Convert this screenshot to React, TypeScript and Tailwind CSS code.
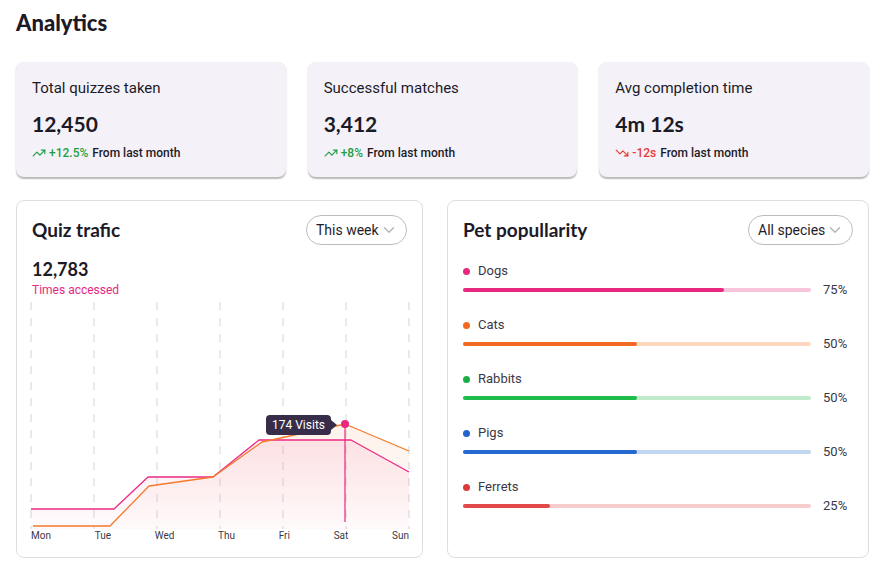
import { ChevronDown, TrendingDown, TrendingUp } from "lucide-react";

const stats = [
  { title: "Total quizzes taken", value: "12,450", delta: "+12.5%", up: true },
  { title: "Successful matches", value: "3,412", delta: "+8%", up: true },
  { title: "Avg completion time", value: "4m 12s", delta: "-12s", up: false },
];

const pets = [
  { name: "Dogs", pct: 75, dot: "bg-[#e8277f]", fill: "bg-[#e8277f]", track: "bg-[#f7c4dc]" },
  { name: "Cats", pct: 50, dot: "bg-[#f26a21]", fill: "bg-[#f26a21]", track: "bg-[#fdd6bf]" },
  { name: "Rabbits", pct: 50, dot: "bg-[#1aae44]", fill: "bg-[#1ebc4a]", track: "bg-[#bfeacb]" },
  { name: "Pigs", pct: 50, dot: "bg-[#2364c8]", fill: "bg-[#2569d0]", track: "bg-[#c0d7f1]" },
  { name: "Ferrets", pct: 25, dot: "bg-[#dc3a3a]", fill: "bg-[#e24a4a]", track: "bg-[#f6cccc]" },
];

const days = ["Mon", "Tue", "Wed", "Thu", "Fri", "Sat", "Sun"];
const gridX = [31, 94, 157, 220, 283, 346, 409];

const pinkPts = "31,509 114,509 148,477 213,477 259,440 351,440 409,472";
const orangePts = "33,526 110,526 149,486 213,477 262,442 345,424 409,451";

const Dropdown = ({ label, width }: { label: string; width: string }) => (
  <div
    className={`${width} h-[30px] rounded-full border border-[#bdbbc2] flex items-center justify-between pl-[9px] pr-[8px] text-[14px] text-[#1f1d2a]`}
  >
    <span>{label}</span>
    <ChevronDown size={18} strokeWidth={1.8} className="text-[#b3b1b8]" />
  </div>
);

const TrafficChart = () => (
  <div className="relative -ml-[2px] w-[380px]">
    <svg width={380} height={229} viewBox="30 300 380 229" className="block">
      <defs>
        <linearGradient id="pinkFill" x1="0" y1="0" x2="0" y2="1">
          <stop offset="0%" stopColor="#ec2a84" stopOpacity="0.09" />
          <stop offset="100%" stopColor="#ec2a84" stopOpacity="0.02" />
        </linearGradient>
        <linearGradient id="orangeFill" x1="0" y1="0" x2="0" y2="1">
          <stop offset="0%" stopColor="#f47a2a" stopOpacity="0.1" />
          <stop offset="100%" stopColor="#f47a2a" stopOpacity="0.01" />
        </linearGradient>
      </defs>
      {gridX.map((x) => (
        <line
          key={x}
          x1={x}
          x2={x}
          y1={302}
          y2={529}
          stroke="#e4e4e7"
          strokeWidth={1.5}
          strokeDasharray="8 8"
        />
      ))}
      <polygon points={`${orangePts} 409,529 33,529`} fill="url(#orangeFill)" />
      <polygon points={`${pinkPts} 409,529 31,529`} fill="url(#pinkFill)" />
      <polyline points={pinkPts} fill="none" stroke="#ec2a84" strokeWidth={1.3} strokeLinejoin="round" />
      <polyline points={orangePts} fill="none" stroke="#f47a2a" strokeWidth={1.3} strokeLinejoin="round" />
      <line x1={345} x2={345} y1={424} y2={522} stroke="#e8277f" strokeWidth={1.2} />
      <circle cx={345} cy={424} r={4} fill="#e8277f" />
    </svg>
    <div className="absolute left-[236px] top-[115px] h-[20px] px-[6px] rounded-[4px] bg-[#382d49] text-white text-[12px] leading-[20px] whitespace-nowrap">
      174 Visits
      <span className="absolute right-[-6px] top-[5px] w-0 h-0 border-y-[5px] border-y-transparent border-l-[6px] border-l-[#382d49]" />
    </div>
  </div>
);

export default function App() {
  return (
    <div className="min-h-screen bg-white pl-4 pr-[13px] pt-[9px] font-['Roboto',sans-serif] text-[#1c1a27]">
      <h1 className="font-['Lato',sans-serif] font-black text-[22px] leading-[28px] mb-[25px]">Analytics</h1>

      <div className="grid grid-cols-3 gap-[22px]">
        {stats.map((s) => (
          <div
            key={s.title}
            className="h-[115px] rounded-[8px] bg-[#f4f2f8] px-4 pt-4 shadow-[0_1.5px_1.5px_rgba(0,0,0,0.28)]"
          >
            <div className="text-[15px] leading-[20px]">{s.title}</div>
            <div className="mt-3 font-['Lato',sans-serif] font-bold text-[21px] leading-[28px]">{s.value}</div>
            <div className="mt-[7px] flex items-center text-[12px] leading-[16px] font-medium">
              {s.up ? (
                <TrendingUp size={14} strokeWidth={2} className="text-[#1e9e46]" />
              ) : (
                <TrendingDown size={14} strokeWidth={2} className="text-[#e53935]" />
              )}
              <span className={`ml-[3px] ${s.up ? "text-[#1e9e46]" : "text-[#e53935]"}`}>{s.delta}</span>
              <span className="ml-1">From last month</span>
            </div>
          </div>
        ))}
      </div>

      <div className="flex gap-6 mt-[23px]">
        <div className="w-[407px] h-[358px] rounded-[8px] border border-[#dedde2] bg-white px-[15px] pt-[14px]">
          <div className="flex items-center justify-between h-[30px]">
            <h2 className="font-['Lato',sans-serif] font-bold text-[19px]">Quiz trafic</h2>
            <Dropdown label="This week" width="w-[101px]" />
          </div>
          <div className="mt-3 font-['Lato',sans-serif] font-bold text-[18px] leading-[24px]">12,783</div>
          <div className="mt-px text-[12px] leading-[16px] text-[#e8277f]">Times accessed</div>
          <div className="mt-[2px]">
            <TrafficChart />
          </div>
          <div className="-ml-px w-[378px] flex justify-between text-[10px] leading-[14px] text-[#3b3946]">
            {days.map((d) => (
              <span key={d}>{d}</span>
            ))}
          </div>
        </div>

        <div className="flex-1 h-[358px] rounded-[8px] border border-[#dedde2] bg-white px-[15px] pt-[14px]">
          <div className="flex items-center justify-between h-[30px]">
            <h2 className="font-['Lato',sans-serif] font-bold text-[19px]">Pet popullarity</h2>
            <Dropdown label="All species" width="w-[105px]" />
          </div>
          <div className="mt-[17px] flex flex-col gap-[17px]">
            {pets.map((p) => (
              <div key={p.name}>
                <div className="flex items-center gap-2 h-[18px] text-[13px] text-[#3a3847]">
                  <span className={`w-[7px] h-[7px] rounded-full ${p.dot}`} />
                  <span>{p.name}</span>
                </div>
                <div className="mt-px h-[18px] flex items-center">
                  <div className={`w-[348px] h-[4px] rounded-full ${p.track}`}>
                    <div className={`h-full rounded-full ${p.fill}`} style={{ width: `${p.pct}%` }} />
                  </div>
                  <span className="ml-3 text-[13px] text-[#3a3847]">{p.pct}%</span>
                </div>
              </div>
            ))}
          </div>
        </div>
      </div>
    </div>
  );
}
